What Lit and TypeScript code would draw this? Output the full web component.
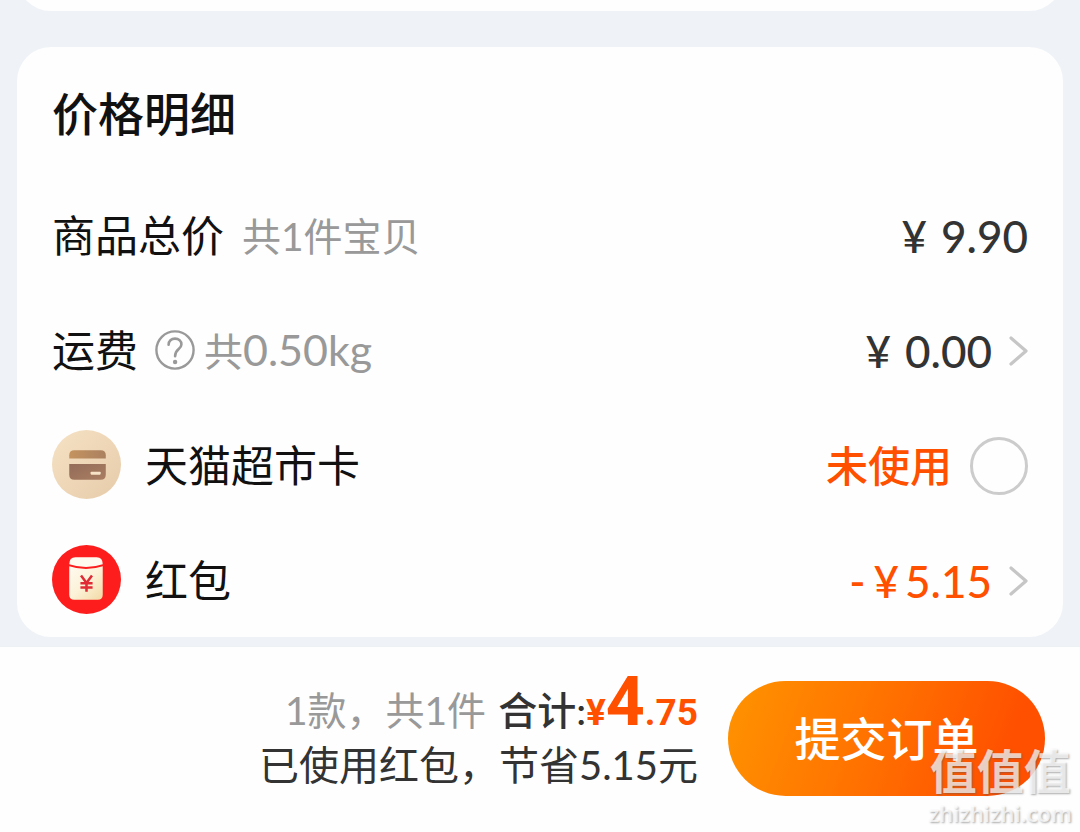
import { LitElement, html, css, svg } from "lit";
import { customElement, state } from "lit/decorators.js";

const chevron = svg`<svg class="chevron" viewBox="0 0 20 32" aria-hidden="true">
  <path d="M3 3 L18 16 L3 29" fill="none" stroke="#c6c6c6" stroke-width="3.2" stroke-linecap="round" stroke-linejoin="round"/>
</svg>`;

const helpIcon = svg`<svg class="help-icon" viewBox="0 0 40 40" aria-hidden="true">
  <circle cx="20" cy="20" r="18.6" fill="none" stroke="#999" stroke-width="2.4"/>
  <path d="M13.6 14.8 C13.6 11 16.4 8.6 20 8.6 C23.7 8.6 26.4 11 26.4 14.4 C26.4 19.4 20.1 19 20.1 26.2" fill="none" stroke="#999" stroke-width="2.6" stroke-linecap="round"/>
  <circle cx="20.1" cy="32" r="2.2" fill="#999"/>
</svg>`;

const cardIcon = svg`<svg class="badge" viewBox="0 0 68 68" aria-hidden="true">
  <defs>
    <linearGradient id="cream" x1="0" y1="0" x2="1" y2="1">
      <stop offset="0" stop-color="#f6e2c5"/><stop offset="1" stop-color="#e6cba9"/>
    </linearGradient>
    <linearGradient id="top" x1="0" y1="0" x2="1" y2="0">
      <stop offset="0" stop-color="#c4935f"/><stop offset="1" stop-color="#aa8160"/>
    </linearGradient>
    <linearGradient id="low" x1="0" y1="0" x2="1" y2="1">
      <stop offset="0" stop-color="#936b58"/><stop offset="1" stop-color="#a97e62"/>
    </linearGradient>
  </defs>
  <circle cx="34" cy="34" r="34" fill="url(#cream)"/>
  <path d="M17 28 V25 Q17 20 22 20 H48 Q53 20 53 25 V28 Z" fill="url(#top)"/>
  <path d="M17 33.500 H53 V44 Q53 49 48 49 H22 Q17 49 17 44 Z" fill="url(#low)"/>
  <rect x="38" y="41.2" width="10" height="2.8" rx="0.8" fill="#f6e3c8"/>
</svg>`;

const packetIcon = svg`<svg class="badge" viewBox="0 0 68 68" aria-hidden="true">
  <defs>
    <linearGradient id="paper" x1="0" y1="0" x2="1" y2="1">
      <stop offset="0" stop-color="#fffaf0"/><stop offset="0.5" stop-color="#fcf2d8"/><stop offset="1" stop-color="#f2d9a4"/>
    </linearGradient>
  </defs>
  <circle cx="34" cy="34" r="34" fill="#fd1d1d"/>
  <path d="M17 19 Q17 12 23 12 H44 Q50 12 50 19 Q33.5 24.5 17 19 Z" fill="#fffaf0"/>
  <path d="M17 21 Q33.5 26.5 50 21 V49 Q50 54 45 54 H22 Q17 54 17 49 Z" fill="url(#paper)"/>
  <path d="M28.6 30 L34 37.4 L39.4 30 M34 37.4 V46 M28 37.6 H40 M28 41.800 H40" fill="none" stroke="#e02a36" stroke-width="2.5"/>
</svg>`;

@customElement("app-root")
export class AppRoot extends LitElement {
  @state() private cardUsed = false;

  static styles = css`
    :host {
      display: block;
      font-family: Lato, "Noto Sans CJK SC", sans-serif;
      color: #111;
    }
    * { box-sizing: border-box; }
    .page {
      position: relative;
      display: flex;
      flex-direction: column;
      min-height: 100vh;
      background: #eff3f7;
      overflow: hidden;
    }
    .previous {
      display: flex;
      align-items: flex-end;
      height: 11px;
      margin: 0 17px 36px;
      overflow: hidden;
    }
    .previous-card {
      flex: 1;
      height: 80px;
      border-radius: 34px;
      background: #fefefe;
    }
    .card {
      margin: 0 17px 9px;
      padding: 0 35px;
      border-radius: 34px;
      background: #fefefe;
    }
    .title {
      margin: 0;
      padding: 33px 0 30px;
      font-size: 46px;
      line-height: 67px;
      font-weight: 500;
    }
    .row {
      display: flex;
      align-items: center;
      height: 115px;
      font-size: 43px;
      line-height: 60px;
    }
    .row > span, .row > label { padding-top: 2px; }
    .note { margin-left: 18px; font-size: 39px; color: #999; }
    .note-tight { margin-left: 9px; }
    .weight { font-size: 43px; }
    .help, .more {
      display: flex;
      padding: 0;
      border: 0;
      background: none;
      cursor: pointer;
    }
    .help { margin-left: 17px; }
    .help-icon { width: 40px; height: 40px; }
    .badge { width: 69px; height: 69px; margin-right: 24px; }
    .value {
      display: flex;
      align-items: center;
      margin-left: auto;
      font-size: 44px;
      font-weight: 500;
      color: #333;
    }
    .accent { color: #ff5000; }
    .unused { font-size: 42px; }
    .more { margin-left: 16px; }
    .chevron { width: 20px; height: 32px; }
    .yen { margin-right: 14px; }
    .yen-tight { margin-right: 6px; }
    .minus { margin-right: 8px; }
    .pick {
      appearance: none;
      width: 58px;
      height: 58px;
      margin: 0 0 0 18px;
      border: 3px solid #ccc;
      border-radius: 50%;
      cursor: pointer;
    }
    .pick:checked { border: 16px solid #ff5000; }
    .bar {
      flex: 1;
      display: flex;
      justify-content: flex-end;
      align-items: flex-start;
      gap: 30px;
      padding: 34px 35px 35px;
      border-top: 1px solid #eef1f4;
      background: #fefefe;
    }
    .summary { margin-top: -5px; text-align: right; color: #333; font-size: 39px; line-height: 53px; }
    .line { display: flex; justify-content: flex-end; align-items: baseline; }
    .saving { font-size: 40px; line-height: 52px; }
    .count { color: #999; margin-right: 12px; }
    .total { font-weight: 500; }
    .sum { font: 700 37px/53px Roboto, sans-serif; }
    .big { font-size: 68px; line-height: 53px; }
    .submit {
      width: 317px;
      height: 115px;
      padding: 0;
      border: 0;
      border-radius: 58px;
      background: linear-gradient(110deg, #ff9000 5%, #ff7200 45%, #ff5000 85%);
      color: #fff;
      font: 500 46px/60px Lato, "Noto Sans CJK SC", sans-serif;
      cursor: pointer;
    }
    .mark {
      position: absolute;
      right: 8px;
      bottom: 5px;
      display: flex;
      flex-direction: column;
      align-items: center;
      color: rgba(255, 255, 255, 0.72);
      text-shadow: 1px 1px 2px rgba(90, 90, 90, 0.5);
      font-weight: 700;
      pointer-events: none;
    }
    .mark-name { font-size: 47px; line-height: 56px; }
    .mark-site { font: 600 22px/28px "Open Sans", sans-serif; }
  `;

  render() {
    return html`
      <main class="page">
        <div class="previous"><div class="previous-card"></div></div>
        <section class="card">
          <h2 class="title">价格明细</h2>
          <div class="row">
            <span>商品总价</span><span class="note">共1件宝贝</span>
            <span class="value"><span class="yen">¥</span>9.90</span>
          </div>
          <div class="row">
            <span>运费</span>
            <button class="help" aria-label="运费说明">${helpIcon}</button>
            <span class="note note-tight">共<span class="weight">0.50kg</span></span>
            <span class="value"><span class="yen">¥</span>0.00
              <button class="more" aria-label="运费详情">${chevron}</button></span>
          </div>
          <div class="row">
            ${cardIcon}<label for="market-card">天猫超市卡</label>
            <span class="value accent"><span class="unused">未使用</span>
              <input class="pick" id="market-card" type="checkbox" .checked=${this.cardUsed}
                @change=${(e: Event) => (this.cardUsed = (e.target as HTMLInputElement).checked)} /></span>
          </div>
          <div class="row">
            ${packetIcon}<span>红包</span>
            <span class="value accent"><span class="minus">-</span><span class="yen-tight">¥</span>5.15
              <button class="more" aria-label="选择红包">${chevron}</button></span>
          </div>
        </section>
        <footer class="bar">
          <div class="summary">
            <div class="line">
              <span class="count">1款，共1件</span><span class="total">合计:</span><span class="sum accent">¥<span class="big">4</span>.75</span>
            </div>
            <div class="line saving">已使用红包，节省5.15元</div>
          </div>
          <button class="submit">提交订单</button>
        </footer>
        <div class="mark"><span class="mark-name">值值值</span><span class="mark-site">zhizhizhi.com</span></div>
      </main>
    `;
  }
}
